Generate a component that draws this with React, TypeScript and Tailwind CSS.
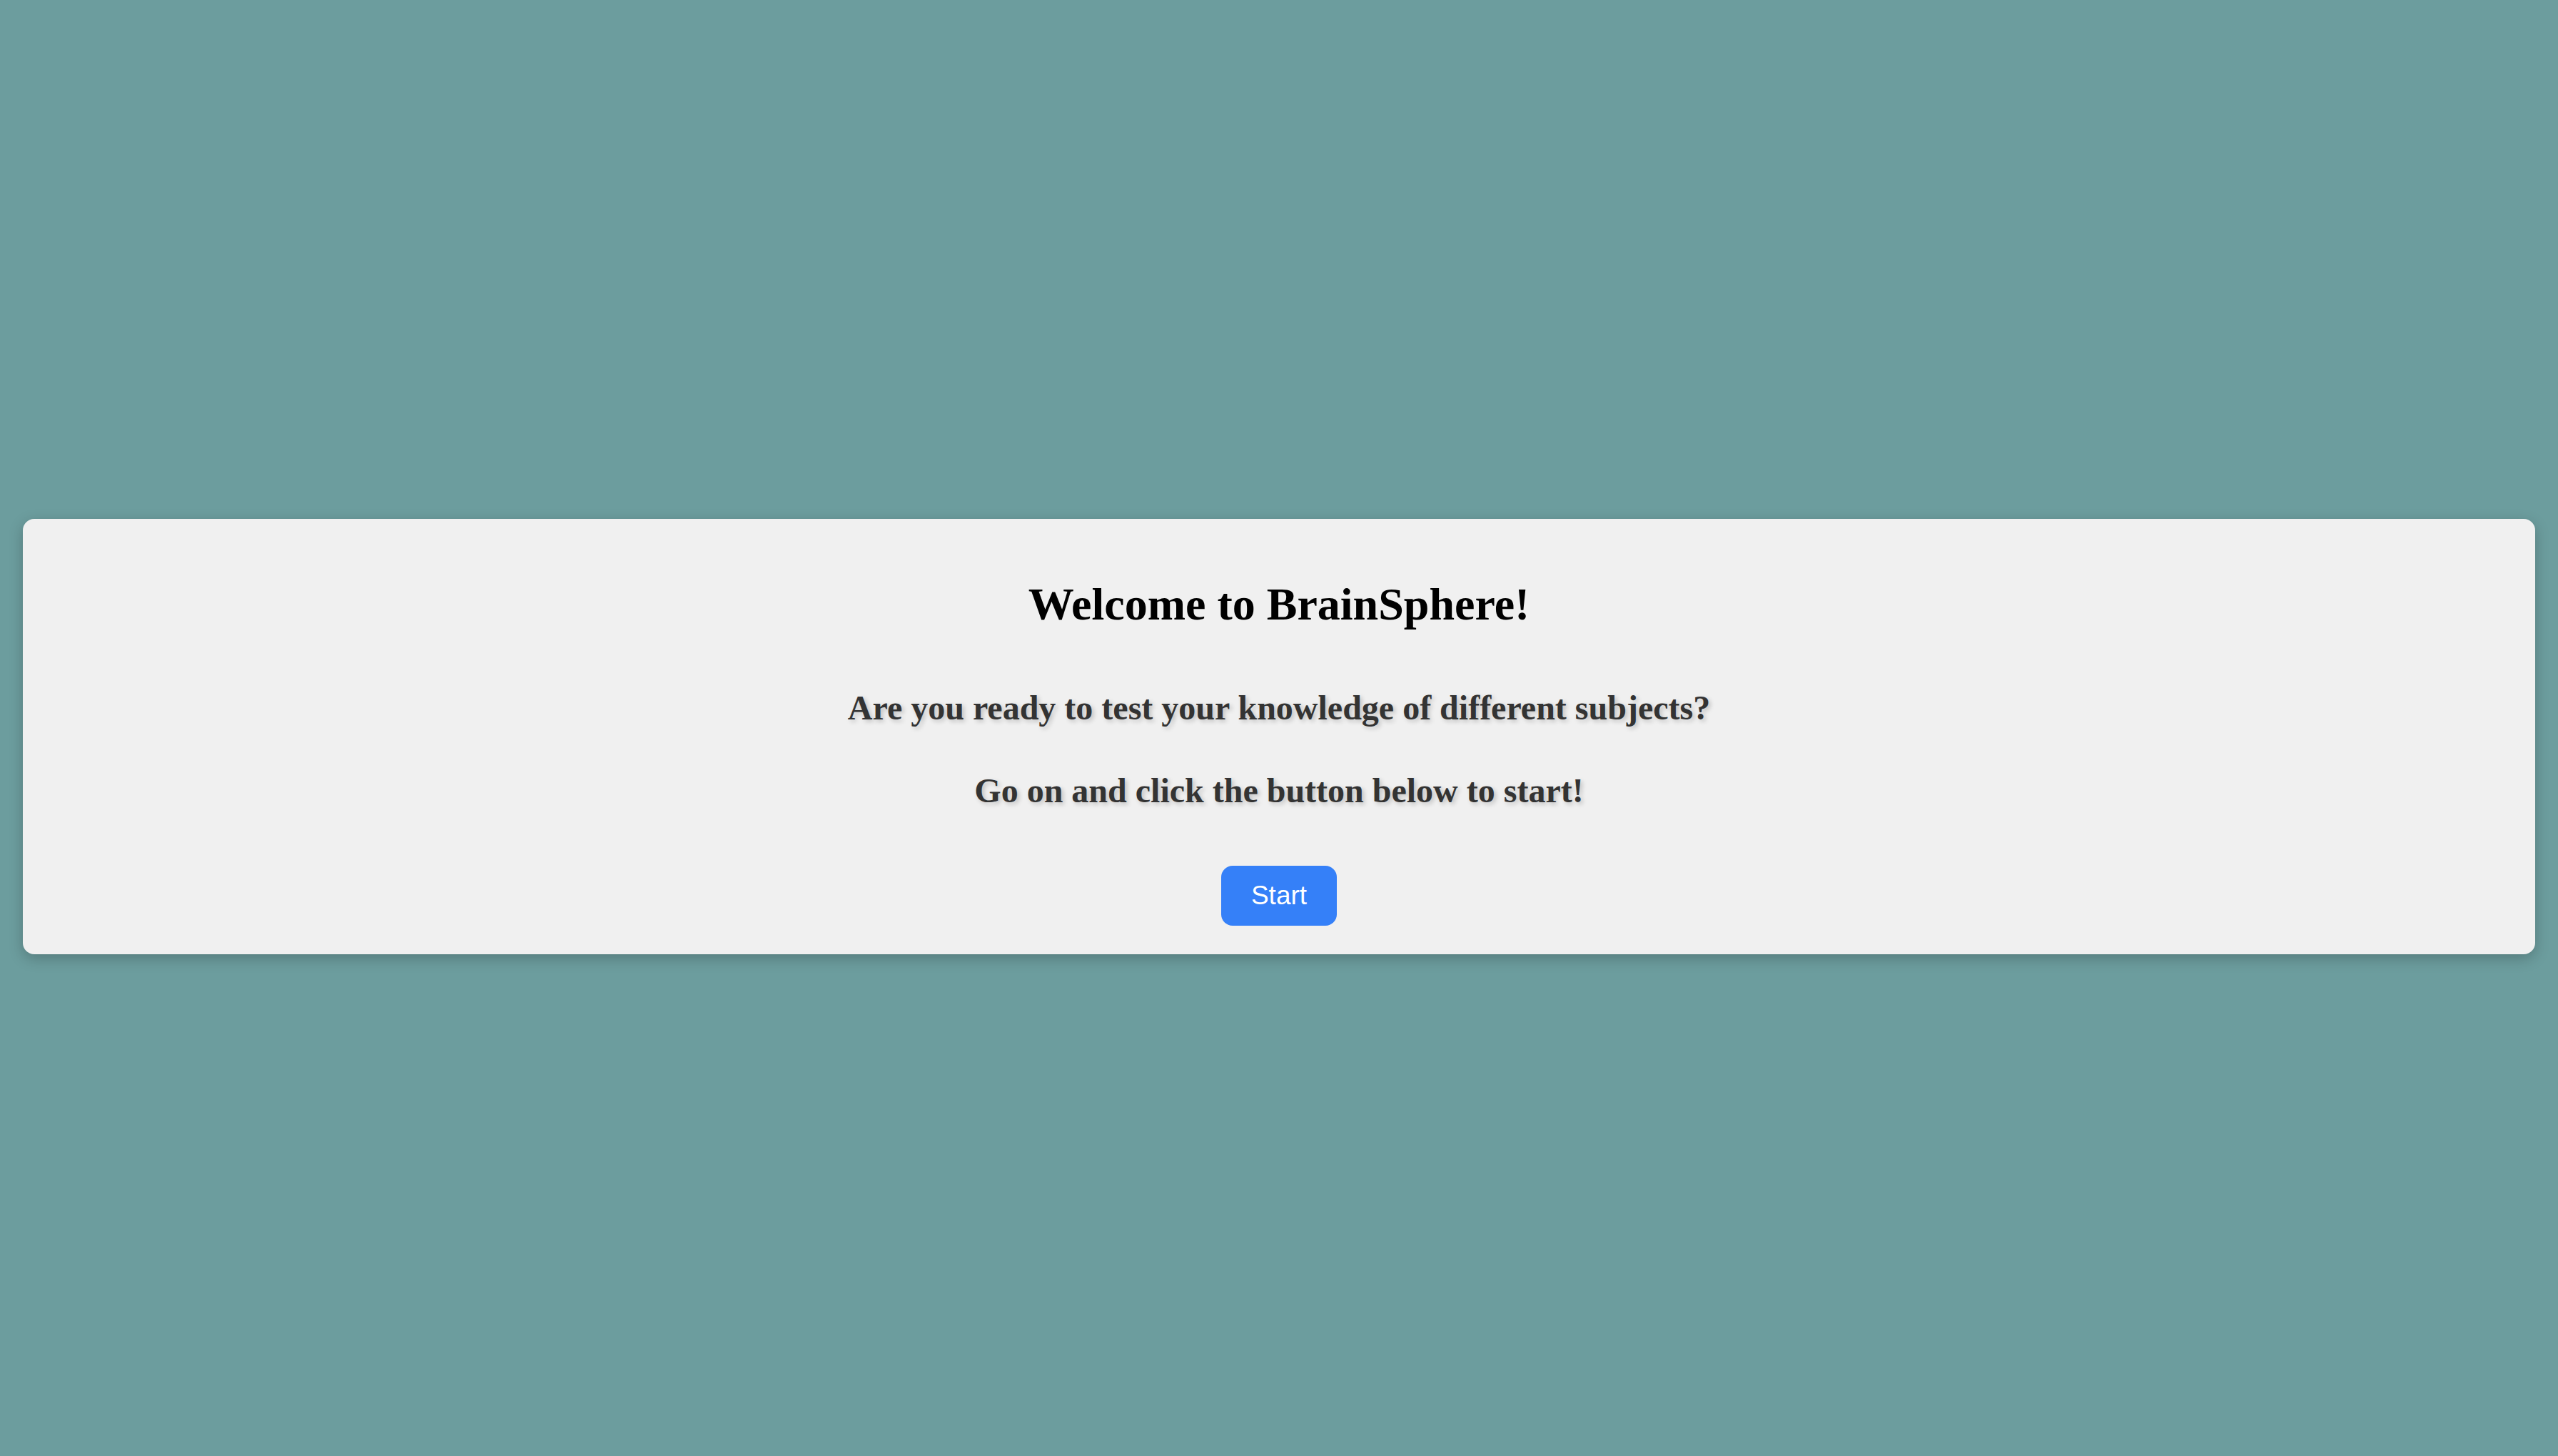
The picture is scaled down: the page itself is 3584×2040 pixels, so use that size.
import React from "react";

export default function App() {
  return (
    <div className="flex h-[2040px] w-full items-center bg-[#6c9d9e] px-[32px] pt-[24px]">
      <div className="flex w-full flex-col items-center rounded-[16px] bg-[#f0f0f0] pt-[83px] pb-[40px] shadow-[0_6px_20px_rgba(0,0,0,0.22)]">
        <h1 className="text-[64px] font-bold leading-[74px] text-black [font-family:'Liberation_Serif','Times_New_Roman',serif]">
          Welcome to BrainSphere!
        </h1>
        <h2 className="mt-[80px] text-[48px] font-bold leading-[55px] text-[#333333] [font-family:'Liberation_Serif','Times_New_Roman',serif] [text-shadow:3px_3px_6px_rgba(0,0,0,0.2)]">
          Are you ready to test your knowledge of different subjects?
        </h2>
        <h2 className="mt-[61px] text-[48px] font-bold leading-[55px] text-[#333333] [font-family:'Liberation_Serif','Times_New_Roman',serif] [text-shadow:3px_3px_6px_rgba(0,0,0,0.2)]">
          Go on and click the button below to start!
        </h2>
        <button className="mt-[78px] flex h-[84px] w-[162px] items-center justify-center rounded-[16px] bg-[#3580f8] text-[37px] text-white [font-family:'Liberation_Sans',Arial,sans-serif]">
          Start
        </button>
      </div>
    </div>
  );
}
